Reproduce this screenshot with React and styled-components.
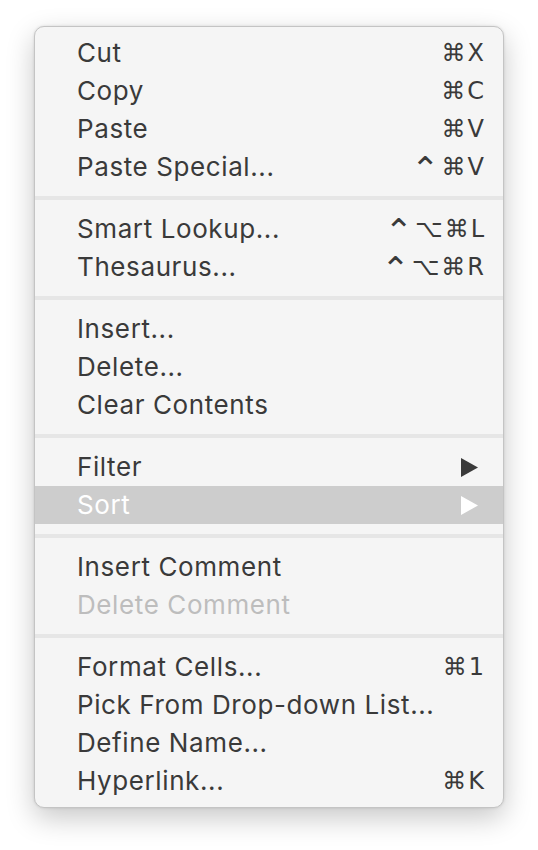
import React from "react";
import styled, { createGlobalStyle } from "styled-components";

const GlobalStyle = createGlobalStyle`
  html, body {
    margin: 0;
    padding: 0;
    background: #ffffff;
  }
  body {
    font-family: Inter, "Liberation Sans", "DejaVu Sans", sans-serif;
  }
`;

const sections = [
  [
    { label: "Cut", shortcut: "⌘X" },
    { label: "Copy", shortcut: "⌘C" },
    { label: "Paste", shortcut: "⌘V" },
    { label: "Paste Special...", shortcut: "⌃⌘V" }
  ],
  [
    { label: "Smart Lookup...", shortcut: "⌃⌥⌘L" },
    { label: "Thesaurus...", shortcut: "⌃⌥⌘R" }
  ],
  [{ label: "Insert..." }, { label: "Delete..." }, { label: "Clear Contents" }],
  [
    { label: "Filter", submenu: true },
    { label: "Sort", submenu: true, active: true }
  ],
  [{ label: "Insert Comment" }, { label: "Delete Comment", disabled: true }],
  [
    { label: "Format Cells...", shortcut: "⌘1" },
    { label: "Pick From Drop-down List..." },
    { label: "Define Name..." },
    { label: "Hyperlink...", shortcut: "⌘K" }
  ]
];

function Arrow() {
  return (
    <ArrowIcon viewBox="0 0 17 19" width="17" height="19">
      <path d="M0 0 L17 9.5 L0 19 Z" fill="currentColor" />
    </ArrowIcon>
  );
}

// the control key glyph is drawn a bit larger than the rest, like the mac menu
function Shortcut({ keys }) {
  return (
    <Keys>
      {[...keys].map((k, i) => (
        <Key key={i} $ctrl={k === "⌃"}>
          {k}
        </Key>
      ))}
    </Keys>
  );
}

export default function App() {
  return (
    <Page>
      <GlobalStyle />
      <Menu>
        {sections.map((items, i) => (
          <React.Fragment key={i}>
            {i > 0 && <Separator />}
            {items.map(item => (
              <Row
                key={item.label}
                $active={item.active}
                $disabled={item.disabled}
              >
                <Label>{item.label}</Label>
                {item.shortcut && <Shortcut keys={item.shortcut} />}
                {item.submenu && <Arrow />}
              </Row>
            ))}
          </React.Fragment>
        ))}
      </Menu>
    </Page>
  );
}

const Page = styled.div`
  padding: 26px 0 0 34px;
  width: 538px;
  height: 850px;
  box-sizing: border-box;
`;

const Menu = styled.div`
  width: 470px;
  height: 782px;
  box-sizing: border-box;
  padding: 7px 0 9px;
  background: #f5f5f5;
  border: 1px solid #c4c4c4;
  border-radius: 10px;
  box-shadow: 0 10px 28px rgba(0, 0, 0, 0.22), 0 0 3px rgba(0, 0, 0, 0.12);
  display: flex;
  flex-direction: column;
`;

const Row = styled.div`
  height: 38px;
  flex: none;
  display: flex;
  align-items: center;
  justify-content: space-between;
  padding: 0 19px 0 42px;
  font-size: 26px;
  letter-spacing: 0.6px;
  color: ${p => (p.$active ? "#ffffff" : p.$disabled ? "#bdbdbd" : "#3a3a3a")};
  background: ${p => (p.$active ? "#cdcdcd" : "transparent")};
`;

const Label = styled.span`
  white-space: nowrap;
  transform: translateY(-1px);
`;

const Keys = styled.span`
  display: flex;
  align-items: center;
  gap: 2px;
  font-family: "DejaVu Sans", Inter, sans-serif;
  font-size: 24px;
  letter-spacing: 0;
  white-space: nowrap;
`;

const Key = styled.span`
  font-size: ${p => (p.$ctrl ? "34px" : "inherit")};
  line-height: 1;
  ${p => p.$ctrl && "transform: translateY(2px);"}
`;

const ArrowIcon = styled.svg`
  display: block;
  margin-right: 6px;
`;

const Separator = styled.div`
  height: 4px;
  flex: none;
  margin: 10px 0;
  background: #e6e6e6;
`;
